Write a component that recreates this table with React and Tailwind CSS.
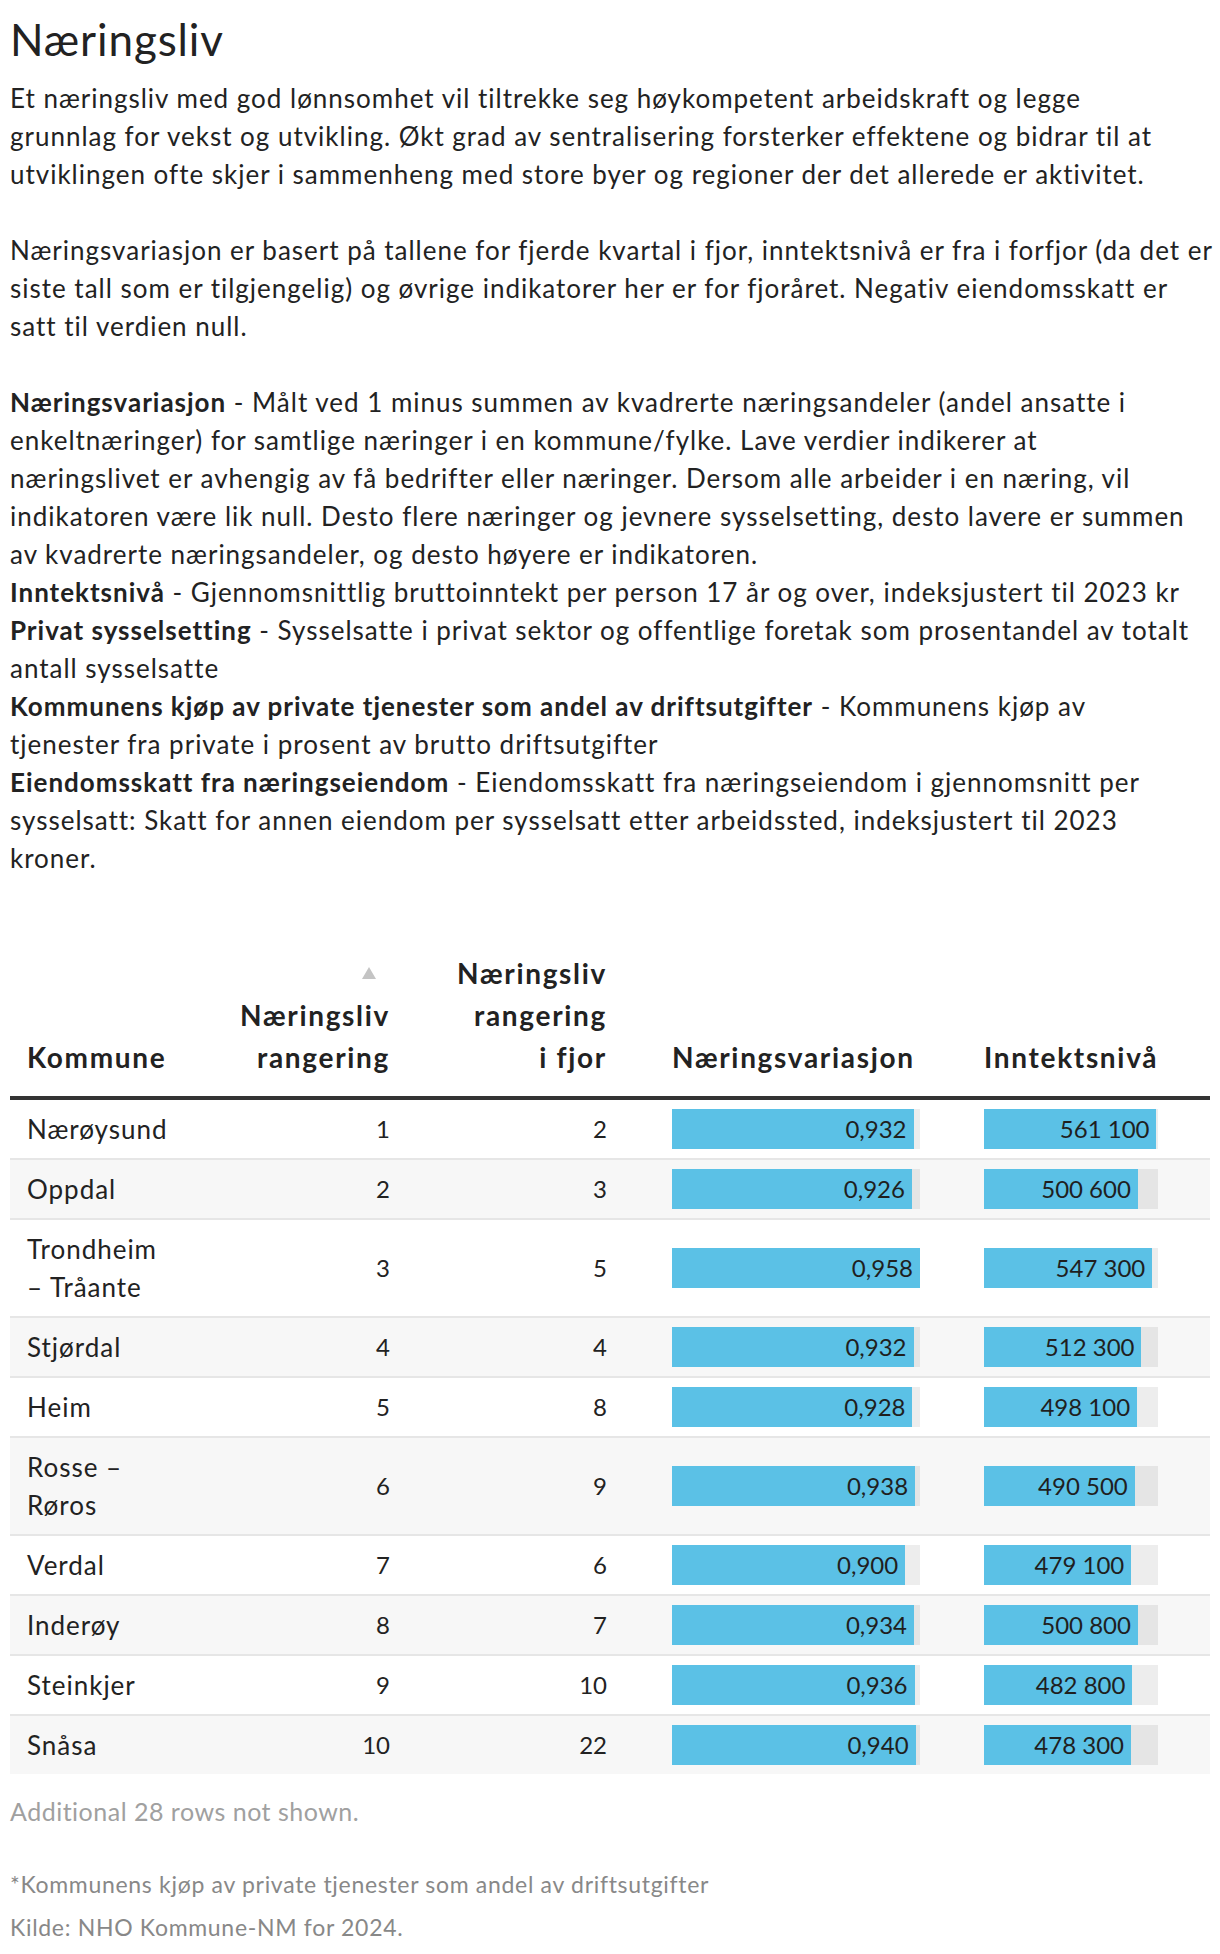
import React from "react";

const rows = [
  [["Nærøysund"], 1, 2, 0.932, 561100],
  [["Oppdal"], 2, 3, 0.926, 500600],
  [["Trondheim", "– Tråante"], 3, 5, 0.958, 547300],
  [["Stjørdal"], 4, 4, 0.932, 512300],
  [["Heim"], 5, 8, 0.928, 498100],
  [["Rosse –", "Røros"], 6, 9, 0.938, 490500],
  [["Verdal"], 7, 6, 0.9, 479100],
  [["Inderøy"], 8, 7, 0.934, 500800],
  [["Steinkjer"], 9, 10, 0.936, 482800],
  [["Snåsa"], 10, 22, 0.94, 478300],
];

const fmtVar = (v) => v.toFixed(3).replace(".", ",");
const fmtInt = (v) => String(v).replace(/\B(?=(\d{3})+(?!\d))/g, "\u00a0");

function Bar({ value, max, width, label }) {
  const pct = Math.min(1, value / max) * 100;
  return (
    <div className={`h-[40px] bg-black/[0.07] ${width}`}>
      <div
        className="h-full bg-[#5bc1e6] flex items-center justify-end pr-[7px] text-[#1f1f1f] whitespace-nowrap text-[24px] tracking-normal"
        style={{ width: `${pct}%` }}
      >
        {label}
      </div>
    </div>
  );
}

const L = ({ children }) => <span className="block whitespace-nowrap">{children}</span>;

export default function App() {
  return (
    <div
      className="bg-white text-[#222] px-[10px] pt-[14px] pb-[20px] text-[26px] leading-[38px] tracking-[0.038em] overflow-hidden"
      style={{ fontFamily: "Lato, 'Open Sans', sans-serif" }}
    >
      <h1 className="text-[44px] leading-[50px] font-normal tracking-[0.02em] mb-[15px]">Næringsliv</h1>

      <div className="mb-[38px]">
        <L>Et næringsliv med god lønnsomhet vil tiltrekke seg høykompetent arbeidskraft og legge</L>
        <L>grunnlag for vekst og utvikling. Økt grad av sentralisering forsterker effektene og bidrar til at</L>
        <L>utviklingen ofte skjer i sammenheng med store byer og regioner der det allerede er aktivitet.</L>
      </div>

      <div className="mb-[38px]">
        <L>Næringsvariasjon er basert på tallene for fjerde kvartal i fjor, inntektsnivå er fra i forfjor (da det er</L>
        <L>siste tall som er tilgjengelig) og øvrige indikatorer her er for fjoråret. Negativ eiendomsskatt er</L>
        <L>satt til verdien null.</L>
      </div>

      <div>
        <L><b className="font-bold">Næringsvariasjon</b> - Målt ved 1 minus summen av kvadrerte næringsandeler (andel ansatte i</L>
        <L>enkeltnæringer) for samtlige næringer i en kommune/fylke. Lave verdier indikerer at</L>
        <L>næringslivet er avhengig av få bedrifter eller næringer. Dersom alle arbeider i en næring, vil</L>
        <L>indikatoren være lik null. Desto flere næringer og jevnere sysselsetting, desto lavere er summen</L>
        <L>av kvadrerte næringsandeler, og desto høyere er indikatoren.</L>
        <L><b className="font-bold">Inntektsnivå</b> - Gjennomsnittlig bruttoinntekt per person 17 år og over, indeksjustert til 2023 kr</L>
        <L><b className="font-bold">Privat sysselsetting</b> - Sysselsatte i privat sektor og offentlige foretak som prosentandel av totalt</L>
        <L>antall sysselsatte</L>
        <L><b className="font-bold">Kommunens kjøp av private tjenester som andel av driftsutgifter</b> - Kommunens kjøp av</L>
        <L>tjenester fra private i prosent av brutto driftsutgifter</L>
        <L><b className="font-bold">Eiendomsskatt fra næringseiendom</b> - Eiendomsskatt fra næringseiendom i gjennomsnitt per</L>
        <L>sysselsatt: Skatt for annen eiendom per sysselsatt etter arbeidssted, indeksjustert til 2023</L>
        <L>kroner.</L>
      </div>

      {/* Table */}
      <div className="mt-[75px]">
        <div className="grid grid-cols-[220px_160px_217px_333px_269px] items-end border-b-[4px] border-[#333] pb-[18px] font-bold text-[28px] leading-[42px] tracking-[0.06em] text-[#222]">
          <div className="pl-[17px]">Kommune</div>
          <div className="text-right flex flex-col items-end">
            <div className="h-[42px] flex items-center pr-[14px]">
              <svg width="14" height="12" viewBox="0 0 14 12">
                <path d="M7 0 L14 12 L0 12 Z" fill="#c4c4c4" />
              </svg>
            </div>
            <div>Næringsliv</div>
            <div>rangering</div>
          </div>
          <div className="text-right">
            <div>Næringsliv</div>
            <div>rangering</div>
            <div>i fjor</div>
          </div>
          <div className="pl-[65px] whitespace-nowrap">Næringsvariasjon</div>
          <div className="pl-[44px] whitespace-nowrap">Inntektsnivå</div>
        </div>

        {rows.map(([name, r, rf, v, inc], i) => (
          <div
            key={i}
            className={`grid grid-cols-[220px_160px_217px_333px_269px] items-center ${
              name.length > 1 ? "pt-[10px] pb-[10px]" : "py-[9px]"
            } ${i % 2 === 1 ? "bg-[#f7f7f7]" : "bg-white"} ${
              i < rows.length - 1 ? "border-b-2 border-[#e6e6e6]" : ""
            }`}
          >
            <div className="pl-[17px]">
              {name.map((n, k) => (
                <div key={k}>{n}</div>
              ))}
            </div>
            <div className="text-right text-[24px] tracking-normal">{r}</div>
            <div className="text-right text-[24px] tracking-normal">{rf}</div>
            <div className="pl-[65px]">
              <Bar value={v} max={0.957} width="w-[248px]" label={fmtVar(v)} />
            </div>
            <div className="pl-[44px]">
              <Bar value={inc} max={566000} width="w-[174px]" label={fmtInt(inc)} />
            </div>
          </div>
        ))}
      </div>

      <div className="mt-[18px] text-[25px] tracking-[0.02em] text-[#a0a0a0]">Additional 28 rows not shown.</div>
      <div className="mt-[37px] text-[23px] leading-[34px] tracking-[0.03em] text-[#888]">
        *Kommunens kjøp av private tjenester som andel av driftsutgifter
      </div>
      <div className="mt-[9px] text-[23px] leading-[34px] tracking-[0.03em] text-[#888]">Kilde: NHO Kommune-NM for 2024.</div>
    </div>
  );
}
